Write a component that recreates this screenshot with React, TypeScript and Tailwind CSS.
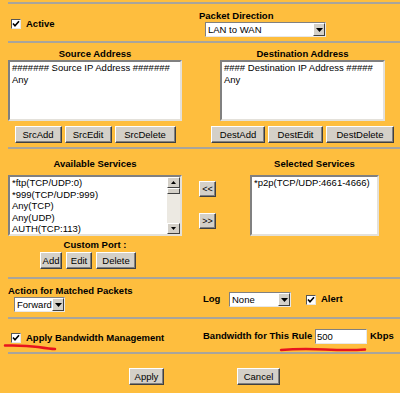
import React from "react";

const Sep = () => <div className="ml-[8px] h-[2px] bg-[#a9a59c]" />;

const Check = () => (
  <div className="w-[10px] h-[10px] bg-white border border-t-[#555] border-l-[#555] border-b-[#e6e6e6] border-r-[#e6e6e6] flex items-center justify-center">
    <svg width="8" height="8" viewBox="0 0 8 8">
      <path d="M1 3.5 L3 5.8 L7 1.2" stroke="#000" strokeWidth="1.6" fill="none" />
    </svg>
  </div>
);

const Btn = ({ children, w }: { children: React.ReactNode; w: string }) => (
  <div
    className={`${w} h-[17px] bg-[#d4d0c8] border border-t-white border-l-white border-r-[#404040] border-b-[#404040] shadow-[inset_-1px_-1px_0_#808080] flex items-center justify-center text-[9.5px] leading-none text-black whitespace-nowrap`}
  >
    {children}
  </div>
);

const Select = ({ w, label }: { w: string; label: string }) => (
  <div className={`${w} h-[15px] bg-white border border-t-[#808080] border-l-[#808080] border-b-[#e8e8e8] border-r-[#e8e8e8] flex items-stretch`}>
    <div className="flex-1 pl-[2px] text-[9.5px] leading-[13px] whitespace-nowrap overflow-visible">{label}</div>
    <div className="w-[12px] shrink-0 bg-[#d4d0c8] border border-t-white border-l-white border-r-[#404040] border-b-[#404040] flex items-center justify-center">
      <svg width="7" height="4" viewBox="0 0 7 4">
        <path d="M0 0 H7 L3.5 4 Z" fill="#000" />
      </svg>
    </div>
  </div>
);

const ListBox = ({ w, lines, scroll }: { w: string; lines: string[]; scroll?: boolean }) => (
  <div className={`${w} h-[61px] bg-white border-2 border-t-[#808080] border-l-[#808080] border-b-[#e4e1da] border-r-[#e4e1da] flex`}>
    <div className="flex-1 pl-[2px] text-[9.5px] leading-[11.5px] overflow-hidden whitespace-nowrap">
      {lines.map((l) => (
        <div key={l}>{l}</div>
      ))}
    </div>
    {scroll && (
      <div className="w-[13px] flex flex-col bg-[#ece9e2]">
        <div className="h-[11px] bg-[#d4d0c8] border border-t-white border-l-white border-r-[#404040] border-b-[#404040] flex items-center justify-center">
          <svg width="5" height="3" viewBox="0 0 5 3"><path d="M0 3 H5 L2.5 0 Z" fill="#000" /></svg>
        </div>
        <div className="h-[6px] bg-[#d4d0c8] border border-t-white border-l-white border-r-[#404040] border-b-[#404040]" />
        <div className="flex-1" />
        <div className="h-[11px] bg-[#d4d0c8] border border-t-white border-l-white border-r-[#404040] border-b-[#404040] flex items-center justify-center">
          <svg width="5" height="3" viewBox="0 0 5 3"><path d="M0 0 H5 L2.5 3 Z" fill="#000" /></svg>
        </div>
      </div>
    )}
  </div>
);

const H = ({ children }: { children: React.ReactNode }) => (
  <div className="h-[12px] text-[9.5px] leading-[12px] font-bold text-center whitespace-nowrap">{children}</div>
);

export default function App() {
  return (
    <div className="w-[400px] h-[393px] overflow-hidden bg-[#febe3e] text-black font-['Liberation_Sans',Arial,sans-serif] pt-[2px] relative">
      <Sep />
      {/* Section 1 */}
      <div className="h-[37px] flex pl-[8px]">
        <div className="w-[191px] flex items-start pt-[15px] pl-[3px]">
          <Check />
          <span className="ml-[5px] text-[9.5px] leading-[10px] font-bold">Active</span>
        </div>
        <div className="pt-[6px]">
          <div className="text-[9.5px] leading-[12px] font-bold whitespace-nowrap">Packet Direction</div>
          <div className="ml-[6px]">
            <Select w="w-[121px]" label="LAN to WAN" />
          </div>
        </div>
      </div>
      <Sep />
      {/* Section 2 */}
      <div className="h-[104px] flex pl-[8px] pt-[5px]">
        <div className="w-[174px] flex flex-col items-center">
          <H>Source Address</H>
          <ListBox w="w-[174px]" lines={["####### Source IP Address #######", "Any"]} />
          <div className="mt-[5px] flex gap-[3px]">
            <Btn w="w-[47px]">SrcAdd</Btn>
            <Btn w="w-[47px]">SrcEdit</Btn>
            <Btn w="w-[61px]">SrcDelete</Btn>
          </div>
        </div>
        <div className="ml-[29px] w-[183px] flex flex-col items-center">
          <H>Destination Address</H>
          <ListBox w="w-[165px]" lines={["#### Destination IP Address #####", "Any"]} />
          <div className="mt-[5px] flex gap-[3px]">
            <Btn w="w-[54px]">DestAdd</Btn>
            <Btn w="w-[55px]">DestEdit</Btn>
            <Btn w="w-[68px]">DestDelete</Btn>
          </div>
        </div>
      </div>
      <Sep />
      {/* Section 3 */}
      <div className="h-[128px] flex pl-[8px]">
        <div className="w-[174px] flex flex-col items-center pt-[9px]">
          <H>Available Services</H>
          <div className="mt-[5px]">
            <ListBox
              w="w-[174px]"
              scroll
              lines={["*ftp(TCP/UDP:0)", "*999(TCP/UDP:999)", "Any(TCP)", "Any(UDP)", "AUTH(TCP:113)"]}
            />
          </div>
          <div className="mt-[3px]">
            <H>Custom Port :</H>
          </div>
          <div className="mt-[1px] flex gap-[4px] pr-[14px]">
            <Btn w="w-[22px]">Add</Btn>
            <Btn w="w-[26px]">Edit</Btn>
            <Btn w="w-[40px]">Delete</Btn>
          </div>
        </div>
        <div className="ml-[17px] w-[17px] pt-[32px] flex flex-col">
          <div className="h-[16px] w-[17px] bg-[#d4d0c8] border border-t-white border-l-white border-r-[#404040] border-b-[#404040] shadow-[inset_-1px_-1px_0_#808080] flex items-center justify-center text-[9px] leading-none">&lt;&lt;</div>
          <div className="mt-[16px] h-[16px] w-[17px] bg-[#d4d0c8] border border-t-white border-l-white border-r-[#404040] border-b-[#404040] shadow-[inset_-1px_-1px_0_#808080] flex items-center justify-center text-[9px] leading-none">&gt;&gt;</div>
        </div>
        <div className="ml-[34px] w-[129px] flex flex-col items-center pt-[9px]">
          <H>Selected Services</H>
          <div className="mt-[5px]">
            <ListBox w="w-[129px]" lines={["*p2p(TCP/UDP:4661-4666)"]} />
          </div>
        </div>
      </div>
      <Sep />
      {/* Section 4 */}
      <div className="h-[38px] flex pl-[8px]">
        <div className="w-[195px] pt-[6px]">
          <div className="text-[9.5px] leading-[12px] font-bold whitespace-nowrap">Action for Matched Packets</div>
          <div className="ml-[6px]">
            <Select w="w-[51px]" label="Forward" />
          </div>
        </div>
        <div className="pt-[13px] flex items-center h-[28px]">
          <span className="w-[26px] text-[9.5px] font-bold">Log</span>
          <Select w="w-[62px]" label="None" />
          <div className="ml-[15px]">
            <Check />
          </div>
          <span className="ml-[5px] text-[9.5px] font-bold">Alert</span>
        </div>
      </div>
      <Sep />
      {/* Section 5 */}
      <div className="h-[33px] flex pl-[8px] relative">
        <div className="w-[195px] flex items-center pt-[5px] pl-[3px]">
          <Check />
          <span className="ml-[5px] text-[9.5px] font-bold whitespace-nowrap">Apply Bandwidth Management</span>
        </div>
        <div className="flex items-center pt-[2px]">
          <span className="w-[112px] text-[9.5px] font-bold whitespace-nowrap">Bandwidth for This Rule</span>
          <div className="w-[52px] h-[15px] bg-white border border-t-[#808080] border-l-[#808080] border-b-[#e8e8e8] border-r-[#e8e8e8] text-[9.5px] leading-[13px] pl-[1px]">500</div>
          <span className="ml-[3px] text-[9.5px] font-bold">Kbps</span>
        </div>
      </div>
      <Sep />
      {/* Section 6 */}
      <div className="flex pt-[14px]">
        <div className="ml-[129px]">
          <Btn w="w-[35px]">Apply</Btn>
        </div>
        <div className="ml-[73px]">
          <Btn w="w-[43px]">Cancel</Btn>
        </div>
      </div>
      <svg className="absolute left-0 top-0 pointer-events-none" width="400" height="393">
        <path d="M5 345.5 Q 25 345 38 347 T 55 349" stroke="#e8141e" strokeWidth="2.5" fill="none" strokeLinecap="round" />
        <path d="M281 350 Q 300 348.5 325 349.5 T 365 349.5" stroke="#e8141e" strokeWidth="2.5" fill="none" strokeLinecap="round" />
      </svg>
    </div>
  );
}
